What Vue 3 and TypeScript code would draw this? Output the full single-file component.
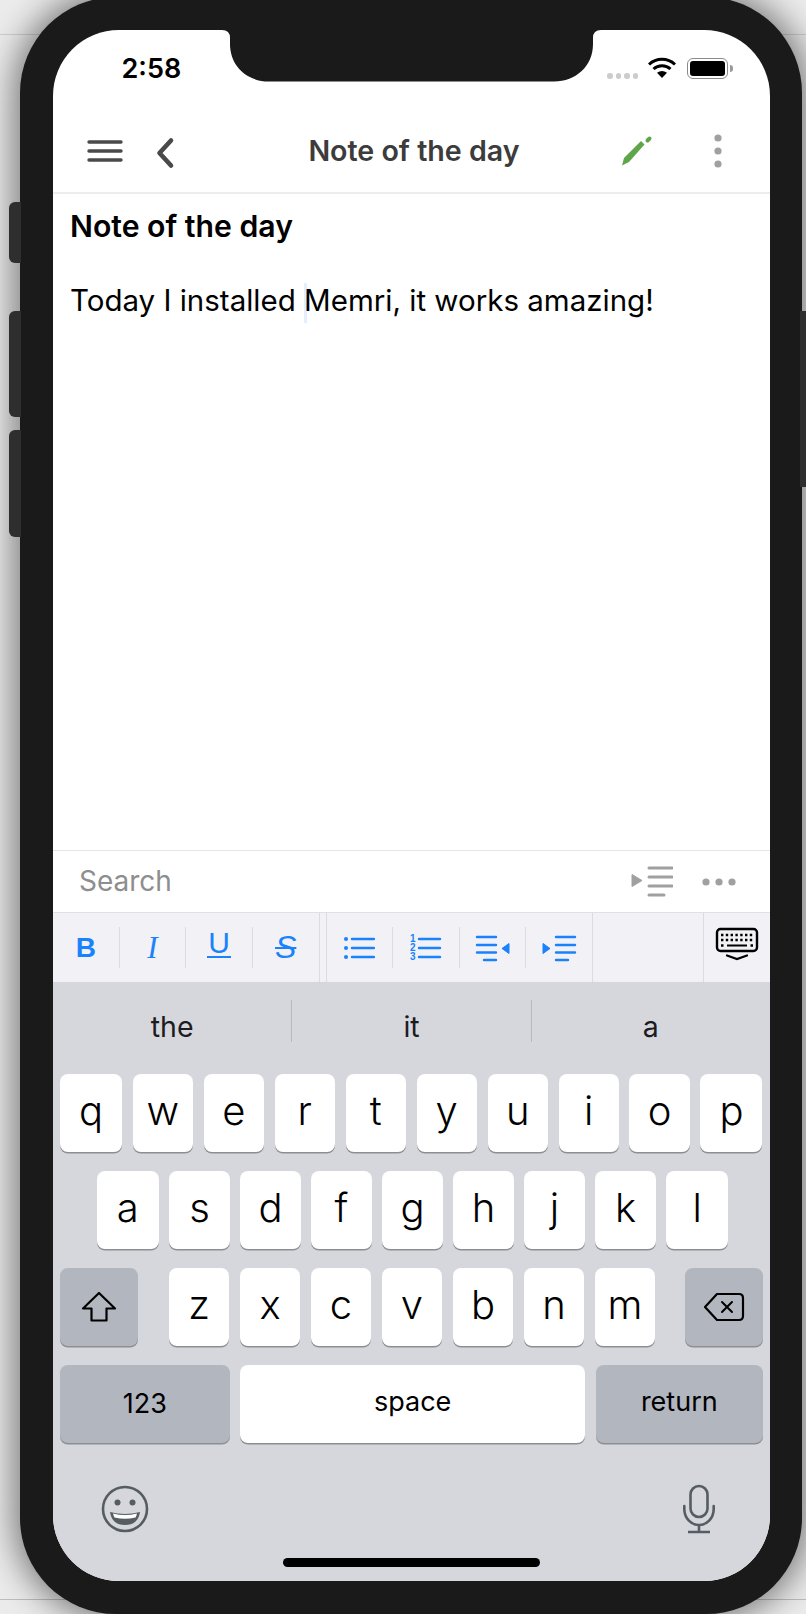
<template>
  <div class="page">
    <div class="phone">
      <span class="side-btn side-mute"></span>
      <span class="side-btn side-vol-up"></span>
      <span class="side-btn side-vol-down"></span>
      <span class="side-power"></span>

      <div class="screen">
        <svg class="notch" width="379" height="52" viewBox="0 0 379 52">
          <path d="M0 0H379Q371 0 371 8V14C371 36 354 51.5 332 51.5H47C25 51.5 8 36 8 14V8Q8 0 0 0Z" fill="#1a1a1a" />
        </svg>

        <div class="status">
          <span class="clock">2:58</span>
          <div class="status-right">
            <div class="signal"><i v-for="n in 4" :key="n"></i></div>
            <svg class="wifi" width="28" height="22" viewBox="0 0 28 22" fill="none" stroke="#000" stroke-width="3">
              <path d="M1 7.5A19 19 0 0 1 27 7.5" />
              <path d="M5.5 12A12.5 12.5 0 0 1 22.5 12" />
              <path d="M9 15.8Q14 12.4 19 15.8L14 21Z" fill="#000" stroke="none" />
            </svg>
            <div class="battery"><i></i></div>
            <span class="battery-nub"></span>
          </div>
        </div>

        <div class="nav">
          <div class="nav-left">
            <svg width="36" height="24" viewBox="0 0 36 24" stroke="#4a4a4a" stroke-width="3.4" stroke-linecap="round">
              <path d="M2 3H34M2 12H34M2 21H34" />
            </svg>
            <svg class="chevron" width="22" height="34" viewBox="0 0 22 34" fill="none" stroke="#4a4a4a" stroke-width="4.6" stroke-linecap="round" stroke-linejoin="round">
              <path d="M16 4.500L4.500 17L16 29.500" />
            </svg>
          </div>
          <div class="nav-title">Note of the day</div>
          <div class="nav-right">
            <svg width="32" height="32" viewBox="0 0 32 32" fill="#5fa64a">
              <path d="M1 30.500L3 23L20 6L23.500 9.500L8 27Z" />
              <path d="M26.500 5.500L28.500 3.500" stroke="#5fa64a" stroke-width="4" stroke-linecap="round" />
            </svg>
            <svg width="10" height="36" viewBox="0 0 10 36" fill="#a0a0a0">
              <circle cx="5" cy="5" r="3.6" />
              <circle cx="5" cy="18" r="3.6" />
              <circle cx="5" cy="31" r="3.6" />
            </svg>
          </div>
        </div>

        <div class="editor">
          <h1 class="note-title">Note of the day</h1>
          <p class="note-body">Today I installed <span class="cursor"></span>Memri, it works amazing!</p>
        </div>

        <div class="search">
          <span class="search-label">Search</span>
          <div class="search-icons">
            <svg width="42" height="34" viewBox="0 0 42 34" fill="#a0a0a0">
              <path d="M1 9.5L11 15.5L1 21.5Z" stroke="#a0a0a0" stroke-linejoin="round" />
              <path d="M18 3H41M18 12H41M18 21H41M18 30H33" stroke="#a0a0a0" stroke-width="3" stroke-linecap="round" />
            </svg>
            <svg width="36" height="10" viewBox="0 0 36 10" fill="#a0a0a0">
              <circle cx="5" cy="5" r="3.6" />
              <circle cx="18" cy="5" r="3.6" />
              <circle cx="31" cy="5" r="3.6" />
            </svg>
          </div>
        </div>

        <div class="toolbar">
          <div class="tool-group">
            <button class="tool"><span class="t-bold">B</span></button>
            <button class="tool"><span class="t-italic">I</span></button>
            <button class="tool"><span class="t-under">U</span></button>
            <button class="tool"><span class="t-strike">S</span></button>
          </div>
          <div class="tool-group second">
            <button class="tool">
              <svg width="32" height="28" viewBox="0 0 32 28" fill="#1a82fb">
                <circle cx="3" cy="5" r="2" /><circle cx="3" cy="14" r="2" /><circle cx="3" cy="23" r="2" />
                <path d="M9 5H31M9 14H31M9 23H31" stroke="#1a82fb" stroke-width="2.4" stroke-linecap="round" />
              </svg>
            </button>
            <button class="tool">
              <svg width="32" height="30" viewBox="0 0 32 30" fill="#1a82fb">
                <text x="0" y="9" class="mini-num">1</text>
                <text x="0" y="18" class="mini-num">2</text>
                <text x="0" y="27" class="mini-num">3</text>
                <path d="M9 6H30M9 15H30M9 24H30" stroke="#1a82fb" stroke-width="2.4" stroke-linecap="round" />
              </svg>
            </button>
            <button class="tool">
              <svg width="36" height="28" viewBox="0 0 36 28" fill="#1a82fb">
                <path d="M2 3H21M2 11H21M2 18.500H21M9 26H21" stroke="#1a82fb" stroke-width="2.4" stroke-linecap="round" />
                <path d="M34 9.500V19.500L27 14.500Z" stroke="#1a82fb" stroke-linejoin="round" />
              </svg>
            </button>
            <button class="tool">
              <svg width="36" height="28" viewBox="0 0 36 28" fill="#1a82fb">
                <path d="M2 9.500V19.500L9 14.500Z" stroke="#1a82fb" stroke-linejoin="round" />
                <path d="M15 3H34M15 11H34M15 18.500H34M15 26H27" stroke="#1a82fb" stroke-width="2.4" stroke-linecap="round" />
              </svg>
            </button>
          </div>
          <div class="tool-spacer"></div>
          <button class="tool-kbd">
            <svg width="44" height="34" viewBox="0 0 44 34" fill="none" stroke="#000">
              <rect x="2" y="2" width="40" height="22" rx="3.500" stroke-width="2.400" />
              <path d="M6 8H38M6 13H38" stroke-width="2.400" stroke-dasharray="2.400 2.400" />
              <path d="M6 18.500H8.500M35.500 18.500H38" stroke-width="2.400" />
              <path d="M12 18.500H32" stroke-width="2" />
              <path d="M12 28.500L22 32L32 28.500" stroke-width="2.200" stroke-linecap="round" />
            </svg>
          </button>
        </div>

        <div class="keyboard">
          <div class="suggestions">
            <span v-for="word in suggestions" :key="word" class="suggestion">{{ word }}</span>
          </div>

          <div class="key-rows">
            <div class="key-row">
              <button v-for="(k, i) in row1" :key="k" class="key" :class="{ edge: i === 0 || i === row1.length - 1 }">{{ k }}</button>
            </div>
            <div class="key-row center">
              <button v-for="(k, i) in row2" :key="k" class="key" :class="{ edge: i === 0 || i === row2.length - 1 }">{{ k }}</button>
            </div>
            <div class="key-row between">
              <button class="key-action">
                <svg width="36" height="32" viewBox="0 0 36 32" fill="none" stroke="#000" stroke-width="2.200" stroke-linejoin="round">
                  <path d="M18 2L34 17.500H25.500V29.500H10.500V17.500H2Z" />
                </svg>
              </button>
              <div class="key-group">
                <button v-for="k in row3" :key="k" class="key">{{ k }}</button>
              </div>
              <button class="key-action">
                <svg width="42" height="30" viewBox="0 0 42 30" fill="none" stroke="#000" stroke-linejoin="round">
                  <path d="M14 2H36Q40 2 40 6V24Q40 28 36 28H14L2 15Z" stroke-width="2.200" />
                  <path d="M19 10L29 20M29 10L19 20" stroke-width="2" stroke-linecap="round" />
                </svg>
              </button>
            </div>
            <div class="key-row">
              <button class="key-wide">123</button>
              <button class="key-space">space</button>
              <button class="key-return">return</button>
            </div>
          </div>

          <div class="kb-bottom">
            <svg width="48" height="48" viewBox="0 0 48 48">
              <circle cx="24" cy="24" r="22" fill="none" stroke="#555d63" stroke-width="2.600" />
              <circle cx="16.500" cy="17.500" r="3" fill="#555d63" />
              <circle cx="31.500" cy="17.500" r="3" fill="#555d63" />
              <path d="M9 27Q24 31 39 27Q37 40 24 40Q11 40 9 27Z" fill="#555d63" />
              <path d="M12 28.500Q24 31.500 36 28.500Q35.500 31 34.500 32.500Q24 35 13.500 32.500Q12.500 31 12 28.500Z" fill="#fff" />
            </svg>
            <svg width="36" height="50" viewBox="0 0 36 50" fill="none" stroke="#555d63" stroke-width="2.600">
              <rect x="9.500" y="2" width="17" height="31" rx="8.500" />
              <path d="M3.300 22V25A14.700 16 0 0 0 32.700 25V22" stroke-linecap="round" />
              <path d="M18 41V48M7 48H29" />
            </svg>
          </div>

          <div class="home-bar"></div>
        </div>
      </div>
    </div>
  </div>
</template>

<script setup lang="ts">
const suggestions: string[] = ['the', 'it', 'a']
const row1: string[] = ['q', 'w', 'e', 'r', 't', 'y', 'u', 'i', 'o', 'p']
const row2: string[] = ['a', 's', 'd', 'f', 'g', 'h', 'j', 'k', 'l']
const row3: string[] = ['z', 'x', 'c', 'v', 'b', 'n', 'm']
</script>

<style>
html,
body {
  margin: 0;
  background: #e6e6e6;
}
</style>

<style scoped>
.page {
  width: 806px;
  height: 1614px;
  overflow: hidden;
  box-sizing: border-box;
  padding-left: 20px;
  background:
    linear-gradient(#cfcfcf, #cfcfcf) 0 34px / 100% 1px no-repeat,
    linear-gradient(#bdbdbd, #bdbdbd) 0 1599px / 100% 1px no-repeat,
    #ececec;
  font-family: Inter, "Liberation Sans", sans-serif;
}

.phone {
  position: relative;
  width: 782px;
  height: 1617px;
  margin-top: -3px;
  box-sizing: border-box;
  padding: 33px;
  border-radius: 96px;
  background: #1a1a1a;
  box-shadow: 0 0 34px 6px rgba(0, 0, 0, 0.5);
}

.side-btn {
  position: absolute;
  left: -11px;
  width: 12px;
  border-radius: 6px 0 0 6px;
  background: #2e2e2e;
}

.side-mute {
  top: 205px;
  height: 61px;
}

.side-vol-up {
  top: 314px;
  height: 106px;
}

.side-vol-down {
  top: 433px;
  height: 107px;
}

.side-power {
  position: absolute;
  top: 314px;
  right: -5px;
  width: 7px;
  height: 176px;
  background: #2e2e2e;
}

.screen {
  position: relative;
  display: flex;
  flex-direction: column;
  width: 717px;
  height: 1551px;
  overflow: hidden;
  border-radius: 66px;
  background: #fff;
}

.notch {
  position: absolute;
  top: 0;
  left: 169px;
}

.status {
  display: flex;
  justify-content: space-between;
  height: 80px;
  box-sizing: border-box;
  padding: 25px 37px 0 68.500px;
}

.clock {
  font-size: 27px;
  font-weight: 600;
  line-height: 28px;
  color: #000;
}

.status-right {
  display: flex;
  align-items: flex-start;
}

.signal {
  display: flex;
  gap: 3px;
  margin: 18px 10px 0 0;
}

.signal i {
  width: 5.500px;
  height: 5.500px;
  border-radius: 50%;
  background: #cccccc;
}

.wifi {
  margin: 2px 11px 0 0;
}

.battery {
  width: 41px;
  height: 21px;
  margin-top: 3px;
  box-sizing: border-box;
  padding: 2px;
  border: 1.500px solid #8a8a8a;
  border-radius: 6px;
}

.battery i {
  display: block;
  height: 100%;
  border-radius: 3px;
  background: #000;
}

.battery-nub {
  width: 3px;
  height: 7px;
  margin: 10px 0 0 2px;
  border-radius: 0 3px 3px 0;
  background: #9a9a9a;
}

.nav {
  display: grid;
  grid-template-columns: 1fr auto 1fr;
  align-items: center;
  height: 84px;
  box-sizing: border-box;
  border-bottom: 2px solid #ededed;
  padding: 0 47px 0 34px;
}

.nav-left {
  display: flex;
  align-items: center;
  gap: 32px;
}

.chevron {
  margin-top: 3px;
}

.nav-title {
  margin: 0 0 2px 18px;
  font-size: 28.600px;
  font-weight: 600;
  color: #3c3c3c;
}

.nav-right {
  display: flex;
  align-items: center;
  justify-content: flex-end;
  gap: 60px;
}

.editor {
  flex: 1;
  padding: 0 17px;
  color: #000;
}

.note-title {
  margin: 14px 0 0;
  font-size: 30.200px;
  font-weight: 600;
  line-height: 36px;
}

.note-body {
  margin: 38px 0 0;
  font-size: 29.500px;
  line-height: 36px;
}

.cursor {
  display: inline-block;
  width: 3px;
  height: 40px;
  margin-right: -3px;
  vertical-align: middle;
  background: #e3efff;
}

.search {
  display: flex;
  align-items: center;
  justify-content: space-between;
  height: 62px;
  box-sizing: border-box;
  border-top: 1.500px solid #e4e4e4;
  padding: 0 33px 0 26px;
}

.search-label {
  margin-bottom: 2px;
  font-size: 28px;
  color: #8e8e8e;
}

.search-icons {
  display: flex;
  align-items: center;
  gap: 28px;
}

.toolbar {
  display: flex;
  height: 70px;
  box-sizing: border-box;
  border-top: 1.500px solid #e0e0e2;
  background: #f1f1f6;
}

.tool-group {
  display: flex;
  align-items: center;
  width: 265.500px;
  border-right: 1.500px solid #dcdcdf;
}

.tool-group.second {
  margin-left: 6px;
  border-left: 1.500px solid #dcdcdf;
}

.tool {
  display: flex;
  align-items: center;
  justify-content: center;
  flex: 1;
  height: 41px;
  padding: 0;
  border: 0;
  border-right: 1.500px solid #dcdcdf;
  background: none;
  color: #1a82fb;
}

.tool:last-child {
  border-right: 0;
}

.t-bold {
  font-size: 28px;
  font-weight: 800;
}

.t-italic {
  font-family: "Liberation Serif", serif;
  font-size: 31px;
  font-style: italic;
}

.t-under {
  margin-top: -8px;
  padding: 0 1px;
  border-bottom: 2px solid #1a82fb;
  font-size: 30px;
  font-weight: 300;
  line-height: 26px;
}

.t-strike {
  font-size: 32px;
  font-style: italic;
  font-weight: 300;
  text-decoration: line-through;
  text-decoration-thickness: 2px;
}

.mini-num {
  font-size: 10px;
  font-weight: 800;
}

.tool-spacer {
  flex: 1;
  border-right: 1.500px solid #dcdcdf;
}

.tool-kbd {
  display: flex;
  justify-content: center;
  width: 66px;
  padding: 14px 0 0;
  border: 0;
  background: none;
}

.keyboard {
  flex: none;
  height: 599px;
  background: #d6d7dc;
}

.suggestions {
  display: flex;
  height: 92px;
}

/* text sits lower than the divider's middle */
.suggestion {
  display: flex;
  align-items: flex-start;
  justify-content: center;
  flex: 1;
  height: 42px;
  margin-top: 18px;
  border-right: 1.500px solid #b9bac0;
  font-size: 28.500px;
  line-height: 54px;
  color: #1c1c1e;
}

.suggestion:last-child {
  border-right: 0;
}

.key-rows {
  display: flex;
  flex-direction: column;
  gap: 19px;
  padding: 0 7px;
}

.key-row {
  display: flex;
  gap: 10.600px;
}

.key-row.center {
  justify-content: center;
  padding-left: 2px;
}

.key-row.between {
  justify-content: space-between;
}

.key-group {
  display: flex;
  gap: 10.600px;
  margin-left: 1px;
}

.key,
.key-action,
.key-wide,
.key-space,
.key-return {
  display: flex;
  align-items: center;
  justify-content: center;
  height: 78px;
  padding: 0;
  border: 0;
  border-radius: 8px;
  background: #fff;
  box-shadow: 0 1.500px 0 #8d8e92;
  color: #000;
  font-family: Inter, "Liberation Sans", sans-serif;
}

.key {
  width: 60.400px;
  padding-bottom: 6px;
  font-size: 40px;
  font-weight: 300;
}

.key.edge {
  width: 62px;
}

.key-action {
  width: 77.700px;
  background: #b2b6bf;
}

.key-wide,
.key-return {
  background: #b2b6bf;
  font-size: 27px;
}

.key-wide {
  width: 169.700px;
  padding-bottom: 2px;
}

.key-space {
  flex: 1;
  padding-bottom: 6px;
  font-size: 27px;
}

.key-return {
  width: 167.400px;
  padding-bottom: 6px;
}

.kb-bottom {
  display: flex;
  align-items: center;
  justify-content: space-between;
  padding: 41px 53px 0 48px;
}

.home-bar {
  width: 257px;
  height: 9px;
  margin: 24px auto 0;
  border-radius: 5px;
  background: #000;
}
</style>
